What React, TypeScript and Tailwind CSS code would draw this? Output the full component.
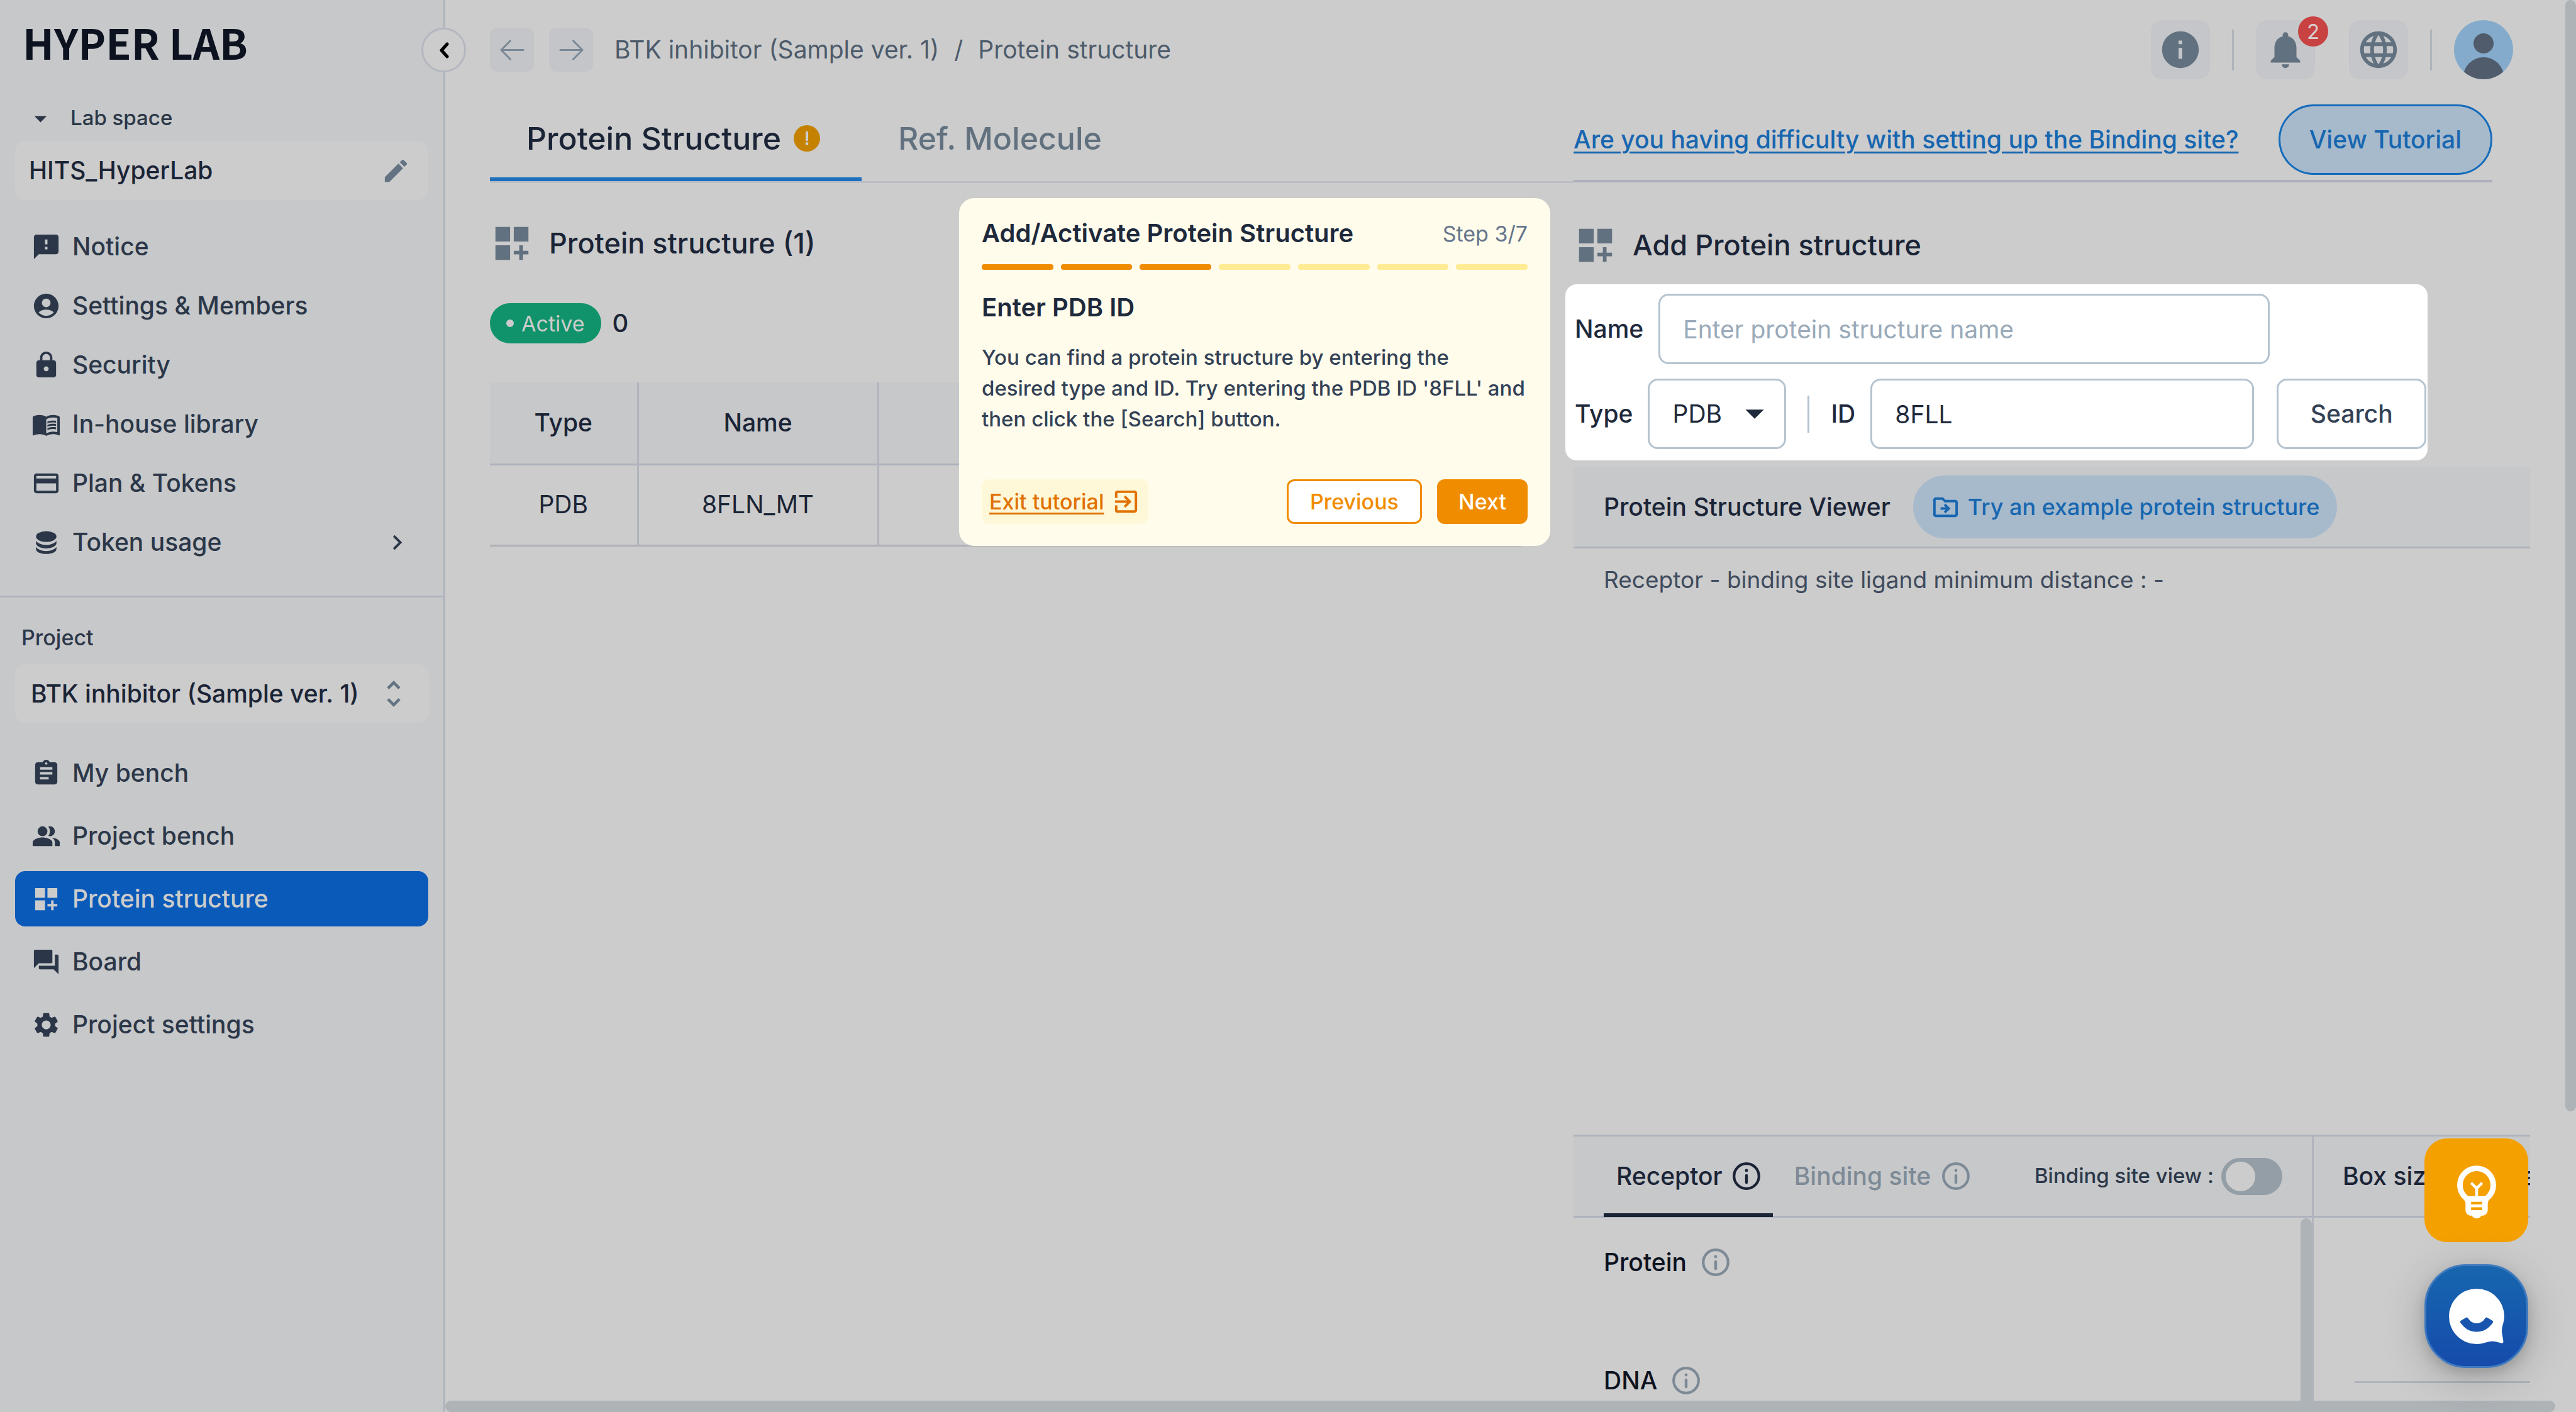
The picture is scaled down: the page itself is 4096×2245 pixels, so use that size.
import React, { useState } from 'react';
import {
  MdAccountCircle,
  MdArrowDropDown,
  MdAssignment,
  MdChevronRight,
  MdCreditCard,
  MdDashboardCustomize,
  MdEdit,
  MdExitToApp,
  MdFeedback,
  MdForum,
  MdInfo,
  MdLanguage,
  MdLock,
  MdMenuBook,
  MdNotifications,
  MdOutlineDriveFileMove,
  MdOutlineEmojiObjects,
  MdPeopleAlt,
  MdSettings,
  MdUnfoldMore,
} from 'react-icons/md';
import { HiOutlineArrowLeft, HiOutlineArrowRight } from 'react-icons/hi2';

function TokenIcon({ className }: { className?: string }) {
  return (
    <svg viewBox="0 0 24 24" fill="currentColor" className={className}>
      <ellipse cx="12" cy="7.2" rx="8.3" ry="4.4" />
      <path d="M3.7 10.6c1.3 2 4.5 3.4 8.3 3.4s7-1.4 8.3-3.4v1.9c0 2.4-3.7 4.3-8.3 4.3s-8.3-1.9-8.3-4.3z" />
      <path d="M3.7 15.6c1.3 2 4.5 3.4 8.3 3.4s7-1.4 8.3-3.4v1.7c0 2.4-3.7 4-8.3 4s-8.3-1.6-8.3-4z" />
    </svg>
  );
}

function InfoCircle({ className }: { className?: string }) {
  return (
    <svg viewBox="0 0 44 44" fill="none" stroke="currentColor" className={className}>
      <circle cx="22" cy="22" r="19.8" strokeWidth="4.2" />
      <path d="M22 21v11" strokeWidth="4.4" strokeLinecap="round" />
      <circle cx="22" cy="13" r="2.4" fill="currentColor" stroke="none" />
    </svg>
  );
}

const labMenu = [
  { label: 'Notice', icon: MdFeedback },
  { label: 'Settings & Members', icon: MdAccountCircle },
  { label: 'Security', icon: MdLock },
  { label: 'In-house library', icon: MdMenuBook },
  { label: 'Plan & Tokens', icon: MdCreditCard },
  { label: 'Token usage', icon: TokenIcon, expandable: true },
];

const projectMenu = [
  { label: 'My bench', icon: MdAssignment },
  { label: 'Project bench', icon: MdPeopleAlt },
  { label: 'Protein structure', icon: MdDashboardCustomize, active: true },
  { label: 'Board', icon: MdForum },
  { label: 'Project settings', icon: MdSettings },
];

function Sidebar() {
  return (
    <aside className="relative w-[708px] shrink-0 border-r-[3px] border-[#afb4bd] bg-[#c7c8ca] pt-4 text-[#2b3748]">
      <div className="flex h-[100px] items-center pl-9 font-['Noto_Sans_CJK_KR',sans-serif] text-[66px] leading-none font-bold text-[#0d1220]">
        HYPER LAB
      </div>
      <button
        aria-label="Collapse sidebar"
        className="absolute top-11 -right-9 z-10 flex size-[71px] items-center justify-center rounded-full border-[3px] border-[#b4b7c0] bg-[#cccccc] text-black"
      >
        <svg viewBox="0 0 16 26" fill="none" stroke="currentColor" strokeWidth="5" strokeLinecap="round" strokeLinejoin="round" className="h-[26px] w-4">
          <path d="M13 3 4 13l9 10" />
        </svg>
      </button>

      <button className="mt-12 flex h-12 items-center gap-6 pl-[41px] text-[33px] font-medium">
        <MdArrowDropDown className="size-[47px]" />
        Lab space
      </button>

      <div className="mx-6 mt-3 flex h-[94px] items-center justify-between rounded-[18px] bg-[#cccccc] pr-7 pl-[22px] text-[39px] font-medium text-[#1a2436]">
        HITS_HyperLab
        <button aria-label="Edit lab name" className="text-[#637383]">
          <MdEdit className="size-[47px]" />
        </button>
      </div>

      <nav className="mx-6 mt-[27px]">
        {labMenu.map(({ label, icon: Icon, expandable }) => (
          <a key={label} href="#" className="flex h-[94px] items-center gap-[18px] pr-[26px] pl-[26px] text-[39px] font-medium">
            <Icon className="size-[47px]" />
            <span className="flex-1">{label}</span>
            {expandable && <MdChevronRight className="size-[47px]" />}
          </a>
        ))}
      </nav>

      <div className="mt-[38px] border-t-[3px] border-[#afb4bd] pt-10">
        <h2 className="pl-[34px] text-[34px] leading-[48px] font-medium">Project</h2>
        <button className="mx-6 mt-[18px] flex h-[94px] w-[658px] items-center justify-between rounded-[18px] bg-[#cccccc] pr-7 pl-[25px] text-[39px] font-medium text-[#1a2436]">
          BTK inhibitor (Sample ver. 1)
          <MdUnfoldMore className="size-[56px] text-[#637383]" />
        </button>
        <nav className="mx-6 mt-[35px] flex flex-col gap-3">
          {projectMenu.map(({ label, icon: Icon, active }) => (
            <a
              key={label}
              href="#"
              className={
                active
                  ? 'flex h-[88px] items-center gap-[18px] rounded-2xl bg-[#0a5ab9] pl-[26px] text-[39px] font-medium text-[#cccccc]'
                  : 'flex h-[88px] items-center gap-[18px] pl-[26px] text-[39px] font-medium'
              }
            >
              <Icon className="size-[47px]" />
              {label}
            </a>
          ))}
        </nav>
      </div>
    </aside>
  );
}

function Header() {
  return (
    <header className="flex h-[158px] items-center justify-between pr-[100px] pl-[71px]">
      <div className="flex items-center text-[39px] text-[#4d5b6b]">
        <button aria-label="Back" className="mr-6 flex size-[70px] items-center justify-center rounded-xl bg-[#c4c5c8] text-[#7a8895]">
          <HiOutlineArrowLeft className="size-[47px]" />
        </button>
        <button aria-label="Forward" className="mr-[34px] flex size-[70px] items-center justify-center rounded-xl bg-[#c4c5c8] text-[#7a8895]">
          <HiOutlineArrowRight className="size-[47px]" />
        </button>
        <a href="#">BTK inhibitor (Sample ver. 1)</a>
        <span className="mx-6">/</span>
        <a href="#">Protein structure</a>
      </div>

      <div className="flex items-center text-[#62717f]">
        <button aria-label="Information" className="flex size-[94px] items-center justify-center rounded-[18px] bg-[#c4c6c9]">
          <MdInfo className="size-[70px]" />
        </button>
        <span className="mx-[35px] h-[65px] w-[3px] bg-[#afb4bb]" />
        <button aria-label="Notifications" className="relative mr-[54px] flex size-[94px] items-center justify-center rounded-[18px] bg-[#c4c6c9]">
          <MdNotifications className="size-[70px]" />
          <span className="absolute -top-1.5 -right-[21px] flex size-12 items-center justify-center rounded-full bg-[#c84242] text-[33px] leading-none text-[#d8d0d0]">
            2
          </span>
        </button>
        <button aria-label="Language" className="flex size-[94px] items-center justify-center rounded-[18px] bg-[#c4c6c9]">
          <MdLanguage className="size-[70px]" />
        </button>
        <span className="mx-[35px] h-[65px] w-[3px] bg-[#afb4bb]" />
        <button aria-label="Account" className="size-[94px] overflow-hidden rounded-full bg-[#84abcb]">
          <svg viewBox="0 0 94 94" fill="#505c6c" className="size-full">
            <circle cx="47" cy="37" r="16" />
            <circle cx="47" cy="91.5" r="32.5" />
          </svg>
        </button>
      </div>
    </header>
  );
}

const steps = [1, 2, 3, 4, 5, 6, 7];

function TutorialCard() {
  return (
    <section className="absolute top-[157px] right-[37px] z-10 w-[940px] rounded-3xl bg-[#fffcec] px-9 pt-7 pb-[35px]">
      <div className="flex h-[56px] items-center justify-between">
        <h2 className="text-[40px] font-semibold text-[#1e293b]">Add/Activate Protein Structure</h2>
        <span className="text-[34px] text-[#64748b]">Step 3/7</span>
      </div>
      <div className="mt-[21px] flex gap-3">
        {steps.map((step) => (
          <span key={step} className={step <= 3 ? 'h-[9px] flex-1 rounded-sm bg-[#f08c00]' : 'h-[9px] flex-1 rounded-sm bg-[#ffeb94]'} />
        ))}
      </div>
      <h3 className="mt-8 text-[40px] leading-[56px] font-semibold text-[#1e293b]">Enter PDB ID</h3>
      <p className="mt-[27px] text-[33px] leading-[49px] font-medium text-[#334155]">
        You can find a protein structure by entering the desired type and ID. Try entering the PDB ID '8FLL' and then click the [Search]
        button.
      </p>
      <div className="mt-[71px] flex h-[71px] gap-6 text-[34px] font-medium">
        <button className="mr-auto flex items-center gap-3 rounded-xl bg-[#fff8d8] px-3 text-[#e07000]">
          <span className="underline decoration-[3px] underline-offset-[5px]">Exit tutorial</span>
          <MdExitToApp className="size-[47px]" />
        </button>
        <button className="rounded-xl border-[3px] border-[#f08c00] bg-white px-[34px] text-[#f08c00]">Previous</button>
        <button className="rounded-xl bg-[#f08c00] px-[34px] text-white">Next</button>
      </div>
    </section>
  );
}

function StructureList() {
  return (
    <div className="relative">
      <div className="flex h-[133px] items-stretch border-b-[3px] border-[#bbbdc6] text-[50px] font-medium">
        <button className="flex items-center gap-5 border-b-[6px] border-[#1c6fbd] pr-[66px] pl-[58px] text-[#1a2436]">
          Protein Structure
          <svg viewBox="0 0 42 42" className="size-[42px]">
            <circle cx="21" cy="21" r="21" fill="#c58200" />
            <path d="M21 11.5v12" stroke="#cccccc" strokeWidth="4" strokeLinecap="round" />
            <circle cx="21" cy="29.5" r="2.4" fill="#cccccc" />
          </svg>
        </button>
        <button className="border-b-[6px] border-transparent px-[58px] text-[#62717f]">Ref. Molecule</button>
      </div>
      <TutorialCard />

      <div className="mt-[61px] flex h-[70px] items-center gap-6 text-[45px] font-medium text-[#1a2436]">
        <MdDashboardCustomize className="size-[70px] text-[#62717f]" />
        <h1>Protein structure (1)</h1>
      </div>

      <div className="mt-[60px] flex h-16 items-center gap-[18px] text-[40px] font-medium text-[#1a2436]">
        <span className="flex h-full items-center gap-3 rounded-full bg-[#10936a] px-[26px] text-[34px] font-normal text-[#cccccc]">
          <span className="size-3 rounded-full bg-[#cccccc]" />
          Active
        </span>
        0
      </div>

      <table className="mt-[62px] w-[1640px] table-fixed border-collapse text-center text-[39px] text-[#1a2436]">
        <thead>
          <tr className="h-[130px] border-b-[3px] border-[#adb2bd] bg-[#c7c8ca]">
            <th className="w-[235px] border-r-[3px] border-[#b1b4bd] font-medium">Type</th>
            <th className="w-[382px] border-r-[3px] border-[#b1b4bd] font-medium">Name</th>
            <th />
          </tr>
        </thead>
        <tbody>
          <tr className="h-[129px] border-b-[3px] border-[#aeb1b6]">
            <td className="border-r-[3px] border-[#b1b4bd]">PDB</td>
            <td className="border-r-[3px] border-[#b1b4bd]">8FLN_MT</td>
            <td />
          </tr>
        </tbody>
      </table>
    </div>
  );
}

function SearchForm() {
  const [name, setName] = useState('');
  const [pdbId, setPdbId] = useState('8FLL');

  return (
    <form className="mt-[27px] -ml-[13px] w-fit rounded-[18px] bg-white pt-[15px] pr-0.5 pb-[18px] pl-[15px] text-[39px] text-[#1e293b]">
      <div className="flex items-center gap-6">
        <label htmlFor="name" className="font-medium">
          Name
        </label>
        <input
          id="name"
          value={name}
          onChange={(e) => setName(e.target.value)}
          placeholder="Enter protein structure name"
          className="h-[112px] w-[972px] rounded-2xl border-[3px] border-[#b5c3cf] px-9 placeholder:text-[#9aaab9]"
        />
      </div>
      <div className="mt-[23px] flex items-center gap-6">
        <label htmlFor="type" className="font-medium">
          Type
        </label>
        <div className="relative">
          <select id="type" className="h-[112px] w-[220px] appearance-none rounded-2xl border-[3px] border-[#b5c3cf] px-9">
            <option>PDB</option>
          </select>
          <MdArrowDropDown className="pointer-events-none absolute top-5 right-[15px] size-[70px]" />
        </div>
        <span className="mx-2.5 h-[59px] w-[3px] bg-[#b5c3cf]" />
        <label htmlFor="pdb-id" className="font-medium">
          ID
        </label>
        <input
          id="pdb-id"
          value={pdbId}
          onChange={(e) => setPdbId(e.target.value)}
          className="mr-3 h-[112px] w-[610px] rounded-2xl border-[3px] border-[#b5c3cf] px-9"
        />
        <button type="button" className="h-[112px] w-[238px] rounded-2xl border-[3px] border-[#b5c3cf] font-medium text-[#334155]">
          Search
        </button>
      </div>
    </form>
  );
}

function StructureSettings() {
  return (
    <div className="flex h-[441px] border-t-[3px] border-[#adb2bd]">
      <div className="relative flex min-w-0 flex-1 flex-col border-r-[3px] border-[#b1b4bd]">
        <div className="flex h-[129px] shrink-0 items-stretch border-b-[3px] border-[#adb2bd] bg-[#c7c8ca] pr-[47px] pl-12 text-[39px] font-medium">
          <button className="-mb-0.5 flex items-center gap-4 border-b-[6px] border-[#1a2436] px-5 pt-1 text-[#1a2436]">
            Receptor
            <InfoCircle className="size-11" />
          </button>
          <button className="ml-[34px] flex items-center gap-[18px] text-[#7d8a96]">
            Binding site
            <InfoCircle className="size-11" />
          </button>
          <label className="ml-auto flex items-center gap-3 text-[33px] text-[#2b3748]">
            Binding site view :
            <input
              type="checkbox"
              role="switch"
              className="flex h-[59px] w-[97px] appearance-none items-center rounded-full bg-[#939ea6] pl-[7px] before:size-[47px] before:rounded-full before:bg-[#cccccc]"
            />
          </label>
        </div>
        <div className="flex flex-col pt-[47px] pl-12 text-[39px] font-medium text-[#0c1220]">
          <div className="flex h-12 items-center gap-6">
            Protein <InfoCircle className="size-11 text-[#7d8a96]" />
          </div>
          <div className="mt-[140px] flex h-12 items-center gap-6">
            DNA <InfoCircle className="size-11 text-[#7d8a96]" />
          </div>
        </div>
        <span className="absolute top-[130px] right-0 bottom-0 w-[18px] rounded-t-full bg-[#aeb3b8]" />
      </div>
      <div className="w-[344px] overflow-hidden">
        <div className="flex h-[129px] items-center border-b-[3px] border-[#adb2bd] bg-[#c7c8ca] pl-[46px] text-[39px] font-medium whitespace-nowrap text-[#1a2436]">
          Box size information
        </div>
        <div className="mt-[260px] ml-[65px] border-t-[3px] border-[#adb2bd]" />
      </div>
    </div>
  );
}

function StructureEditor() {
  return (
    <div className="flex min-h-0 flex-col">
      <div className="mr-[60px] flex h-[132px] shrink-0 items-center justify-between border-b-[4px] border-[#abb0bb] text-[39px] font-medium text-[#1766b0]">
        <a href="#" className="underline decoration-[3px] underline-offset-[5px]">
          Are you having difficulty with setting up the Binding site?
        </a>
        <button className="h-[112px] rounded-full border-[3px] border-[#146bbb] bg-[#a6bacc] px-[46px]">View Tutorial</button>
      </div>

      <div className="mt-[65px] flex h-[70px] items-center gap-6 text-[45px] font-medium text-[#1a2436]">
        <MdDashboardCustomize className="size-[70px] text-[#62717f]" />
        <h1>Add Protein structure</h1>
      </div>

      <SearchForm />

      <div className="mt-[11px] flex h-[129px] shrink-0 items-center border-b-[3px] border-[#adb2bd] bg-[#c7c8ca] pl-12 text-[39px] font-medium text-[#1a2436]">
        Protein Structure Viewer
        <button className="ml-9 flex h-[100px] items-center gap-3 rounded-full bg-[#a6bacc] px-7 text-[36px] text-[#1766b0]">
          <MdOutlineDriveFileMove className="size-[47px]" />
          Try an example protein structure
        </button>
      </div>
      <p className="flex-1 pt-[26px] pl-12 text-[37px] leading-[48px] text-[#3f4b5c]">
        Receptor - binding site ligand minimum distance : -
      </p>
      <StructureSettings />
    </div>
  );
}

export default function App() {
  return (
    <div className="relative flex h-screen overflow-hidden bg-[#cccccc] font-[Inter,sans-serif]">
      <Sidebar />
      <main className="flex min-w-0 flex-1 flex-col">
        <Header />
        <div className="grid min-h-0 flex-1 grid-cols-[1723fr_1521fr] pr-[73px] pl-[71px]">
          <StructureList />
          <StructureEditor />
        </div>
      </main>

      {/* scrollbar thumbs */}
      <span className="absolute top-0 right-0 h-[1767px] w-[17px] rounded-full bg-[#aeb3b8]" />
      <span className="absolute right-[33px] bottom-0 left-[708px] h-[18px] rounded-full bg-[#aeb3b8]" />

      <div className="absolute right-[76px] bottom-[70px] flex flex-col gap-[35px] text-white">
        <button aria-label="Tips" className="flex size-[165px] items-center justify-center rounded-[36px] bg-[#f4a000]">
          <MdOutlineEmojiObjects className="size-[106px]" />
        </button>
        <button
          aria-label="Chat"
          className="flex size-[165px] items-center justify-center rounded-[66px] border-[3px] border-[#3f7abf] bg-linear-to-b from-[#1866ae] to-[#164bac] shadow-[0_14px_70px_rgba(0,0,0,0.2),0_8px_20px_rgba(0,0,0,0.15)]"
        >
          <svg viewBox="0 0 88 88" className="size-[88px]">
            <path
              d="M44 0a44 44 0 0 1 44 44c0 9-4 15-4 23 0 5 2 11 2.500 17 .1 2-1.500 3-3.500 2.500-5-1.300-9-3-14-3-9 0-13 4.500-25 4.500a44 44 0 0 1 0-88z"
              fill="white"
            />
            <path
              d="M18.500 51 27 46q2-1.500 3.500 1 5 8 13.500 8t13.500-8q1.500-2.500 3.500-1l8.500 5q1.500 1 .5 2.500-10 15-26 15t-26-15q-1-1.500.5-2.500z"
              fill="#1955ae"
            />
          </svg>
        </button>
      </div>
    </div>
  );
}
